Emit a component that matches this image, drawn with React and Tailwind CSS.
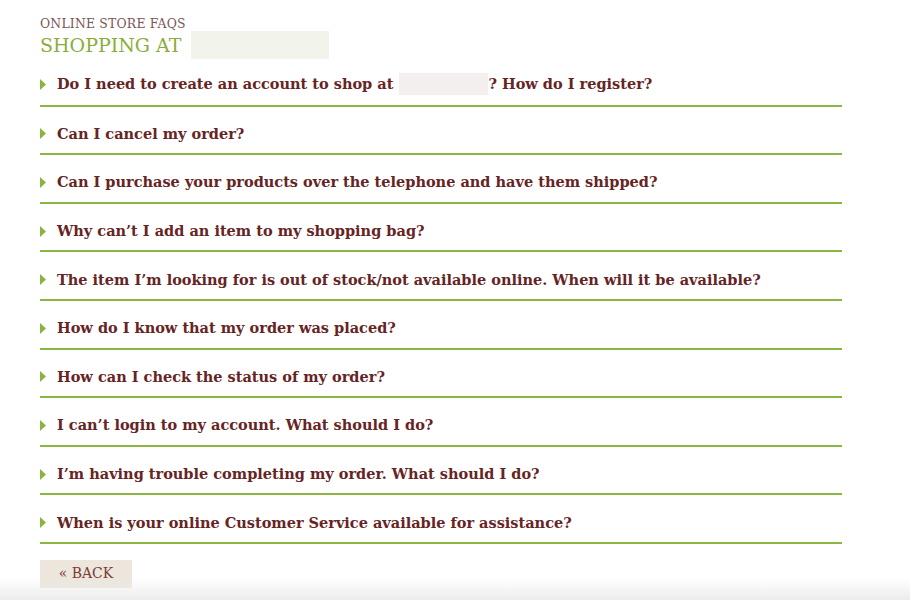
const QUESTIONS = [
  "Do I need to create an account to shop at",
  "Can I cancel my order?",
  "Can I purchase your products over the telephone and have them shipped?",
  "Why can\u2019t I add an item to my shopping bag?",
  "The item I\u2019m looking for is out of stock/not available online. When will it be available?",
  "How do I know that my order was placed?",
  "How can I check the status of my order?",
  "I can\u2019t login to my account. What should I do?",
  "I\u2019m having trouble completing my order. What should I do?",
  "When is your online Customer Service available for assistance?",
];

function Arrow() {
  return (
    <svg width="6" height="11" viewBox="0 0 6 11" className="shrink-0">
      <path d="M0 0 L6 5.5 L0 11 Z" fill="#8ab43c" />
    </svg>
  );
}

export default function App() {
  const serif = { fontFamily: '"DejaVu Serif", "Liberation Serif", serif' };
  return (
    <div className="relative h-[600px] w-[910px] overflow-hidden bg-white" style={serif}>
      <div className="px-[40px] pt-[17px]">
        <div className="text-[12.4px] leading-[14px] tracking-[0.2px] text-[#7a5656]">ONLINE STORE FAQS</div>
        <div className="flex items-center">
          <span className="text-[19px] leading-[28px] text-[#8aad3a]">SHOPPING AT</span>
          <span className="ml-[10px] h-[28px] w-[138px] bg-[#f2f4ec]" />
        </div>
        <ul className="-mt-[3px] w-[802px]">
          {QUESTIONS.map((q, i) => (
            <li
              key={i}
              className="flex items-center border-b-2 border-[#8db544] pt-[17.3px] pb-[9.3px] text-[14.5px] font-bold leading-[20px] text-[#662424]"
            >
              <Arrow />
              <span className="ml-[11px] flex items-center">
                {q}
                {i === 0 && (
                  <>
                    <span className="ml-[6px] inline-block h-[22px] w-[89px] bg-[#f3efef]" />
                    <span>? How do I register?</span>
                  </>
                )}
              </span>
            </li>
          ))}
        </ul>
        <button className="mt-[16px] flex h-[28px] w-[92px] items-center justify-center bg-[#ece6dc] text-[14px] text-[#7a3a3a]">
          &laquo; BACK
        </button>
      </div>
      <div className="absolute bottom-0 left-0 h-[22px] w-full bg-gradient-to-b from-white/0 to-[#ececec]" />
    </div>
  );
}
